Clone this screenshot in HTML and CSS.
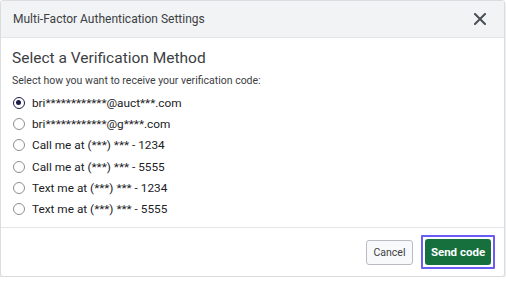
FILE: index.html
```html
<!DOCTYPE html>
<html>
<head>
<meta charset="utf-8">
<link rel="stylesheet" href="styles.css">
</head>
<body>
<div class="dialog">
  <div class="header">
    <span class="header-title">Multi-Factor Authentication Settings</span>
    <svg class="close" width="12" height="12" viewBox="0 0 12 12"><path d="M1 1 L11 11 M11 1 L1 11" stroke="#4a4f55" stroke-width="2" stroke-linecap="square"/></svg>
  </div>
  <div class="body">
    <h1 class="title">Select a Verification Method</h1>
    <p class="subtitle">Select how you want to receive your verification code:</p>
    <div class="options">
      <label class="option"><span class="radio checked"></span><span>bri************@auct***.com</span></label>
      <label class="option"><span class="radio"></span><span>bri************@g****.com</span></label>
      <label class="option"><span class="radio"></span><span>Call me at (***) *** - 1234</span></label>
      <label class="option"><span class="radio"></span><span>Call me at (***) *** - 5555</span></label>
      <label class="option"><span class="radio"></span><span>Text me at (***) *** - 1234</span></label>
      <label class="option"><span class="radio"></span><span>Text me at (***) *** - 5555</span></label>
    </div>
  </div>
  <div class="footer">
    <button class="btn btn-cancel">Cancel</button>
    <span class="focus-ring"><button class="btn btn-send">Send code</button></span>
  </div>
</div>
</body>
</html>
```
FILE: styles.css
```css
* { box-sizing: border-box; }
html, body { margin: 0; padding: 0; background: #ffffff; }
body { font-family: Roboto, "Liberation Sans", sans-serif; color: #3c4043; }
.dialog {
  width: 505px;
  height: 277px;
  border: 1px solid #dadce0;
  border-radius: 3px;
  background: #ffffff;
  box-shadow: 0 2px 3px rgba(0,0,0,0.18);
  display: flex;
  flex-direction: column;
  overflow: hidden;
}
.header {
  height: 37px;
  background: #f1f3f4;
  border-bottom: 1px solid #e3e5e8;
  display: flex;
  align-items: center;
  justify-content: space-between;
  padding: 0 18px 0 12px;
  flex: none;
}
.header-title { font-size: 12px; color: #3c4043; }
.close { display: block; }
.body { padding: 10px 11px 0 11px; flex: 1; }
.title { font-size: 15.5px; font-weight: 400; margin: 0; color: #3c4043; line-height: 20px; }
.subtitle { font-size: 10.5px; margin: 6px 0 4px; color: #3c4043; line-height: 14px; }
.options { display: flex; flex-direction: column; }
.option { display: flex; align-items: center; gap: 7px; height: 21.3px; font-size: 11.8px; color: #202124; }
.radio {
  width: 12px; height: 12px; border-radius: 50%;
  border: 1px solid #8a8f95; background: #fff; flex: none; margin-left: 1px;
}
.radio.checked { border: 1.5px solid #1c1c4a; position: relative; }
.radio.checked::after {
  content: ""; position: absolute; left: 2px; top: 2px; width: 5px; height: 5px; border-radius: 50%; background: #1c1c4a;
}
.footer {
  height: 49px;
  border-top: 1px solid #e3e5e8;
  display: flex; align-items: center; justify-content: flex-end;
  padding-right: 9px; gap: 8px; flex: none;
}
.btn { font-family: Roboto, "Liberation Sans", sans-serif; cursor: pointer; }
.btn-cancel {
  height: 25px; width: 47px; padding: 0;
  background: #f8f9fa; border: 1px solid #b8bcc2; border-radius: 3px;
  font-size: 10.5px; color: #3c4043;
}
.focus-ring {
  display: inline-flex; padding: 2px; border: 2px solid #6a5cf5; border-radius: 1px;
}
.btn-send {
  height: 26px; width: 66px; padding: 0;
  background: #15703e; border: none; border-radius: 3px;
  color: #ffffff; font-size: 11.5px; font-weight: 700;
}
```
